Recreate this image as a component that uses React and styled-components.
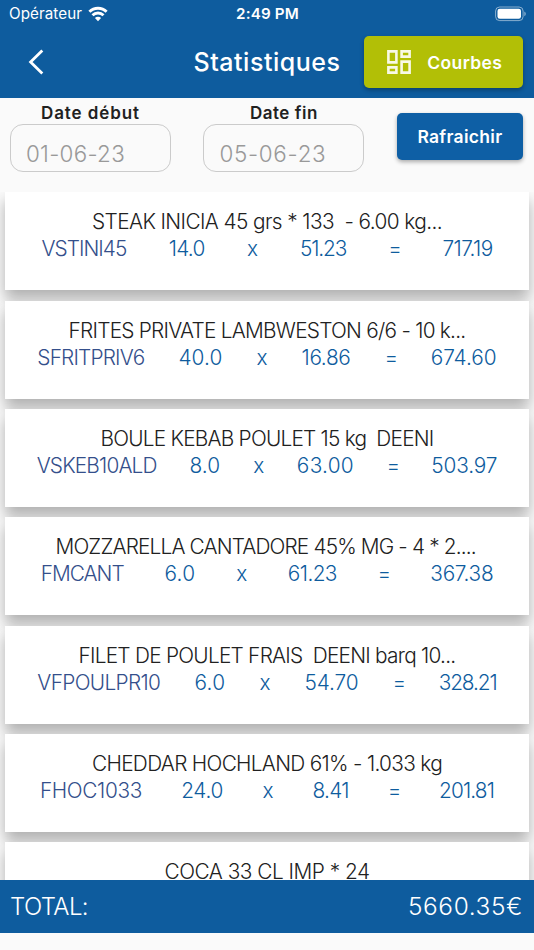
import React, { useLayoutEffect, useRef, useState } from 'react';
import styled, { createGlobalStyle } from 'styled-components';

const GlobalStyle = createGlobalStyle`
  * {
    box-sizing: border-box;
  }

  body {
    margin: 0;
    background: #fafafa;
    font-family: Inter, "Liberation Sans", sans-serif;
    overflow: hidden;
  }
`;

const Screen = styled.div`
  display: flex;
  flex-direction: column;
  width: 534px;
  height: 950px;
  padding-bottom: 17px;
  overflow: hidden;
  background: #fafafa;
`;

const Header = styled.header`
  flex: none;
  height: 98px;
  background: #0e5c9e;
  color: #fff;
`;

const StatusBar = styled.div`
  display: grid;
  grid-template-columns: 1fr auto 1fr;
  align-items: center;
  height: 27px;
  padding: 0 8px 0 9px;
`;

const Carrier = styled.div`
  display: flex;
  align-items: center;
  gap: 6px;
`;

const Battery = styled.svg`
  justify-self: end;
`;

const NavBar = styled.div`
  display: flex;
  align-items: center;
  height: 71px;
  padding: 0 11px 1px 28px;
`;

const BackButton = styled.button`
  display: flex;
  width: 165.5px;
  padding: 0;
  border: 0;
  background: none;
  color: inherit;
`;

const Button = styled.button`
  display: flex;
  align-items: center;
  justify-content: center;
  gap: ${props => props.$gap || 0}px;
  width: ${props => props.$width}px;
  height: ${props => props.$height}px;
  padding: 0;
  border: 0;
  border-radius: 5px;
  background: ${props => props.$color};
  box-shadow: 0 2px 4px rgba(0, 0, 0, 0.32);
  color: #fff;
  font-family: inherit;
`;

const CurvesButton = styled(Button)`
  margin-left: auto;
  padding-left: 3px;
`;

const Filters = styled.section`
  display: flex;
  flex: none;
  height: 94px;
  padding: 5px 11px 0 10px;
`;

const Field = styled.label`
  display: flex;
  flex-direction: column;
  align-items: center;
  width: 161px;
  margin-right: 32.4px;
`;

const DateBox = styled.div`
  display: flex;
  align-items: center;
  width: 161px;
  height: 48px;
  margin-top: 1px;
  padding: 11px 0 0 15px;
  border: 1px solid #cbcbcb;
  border-radius: 13px;
`;

const Refresh = styled(Button)`
  margin: 10px 0 0 auto;
`;

const List = styled.main`
  display: flex;
  flex: 1;
  flex-direction: column;
  gap: 10.35px;
  min-height: 0;
  padding: 0.4px 5.3px 0;
  overflow: hidden;
`;

const Card = styled.article`
  position: relative;
  flex: none;
  height: 98px;
  padding: 16px 15px 0;
  background: #fff;
  box-shadow: 0 9px 14px rgba(0, 0, 0, 0.3);
`;

const CardTitle = styled.div`
  display: flex;
  justify-content: center;
  height: 27px;
`;

const Line = styled.div`
  display: flex;
  justify-content: space-around;
  height: 27px;
`;

const Footer = styled.footer`
  position: relative;
  display: flex;
  flex: none;
  align-items: center;
  justify-content: space-between;
  height: 53px;
  padding: 0 11px 0 10px;
  background: #0e5c9e;
`;

const Label = styled.span`
  display: block;
  flex: none;
  width: ${props => props.$width}px;
  color: ${props => props.$color || '#fff'};
  font-size: ${props => props.$size || 20.8}px;
  font-weight: ${props => props.$weight || 300};
  font-variation-settings: "opsz" 32;
  line-height: 27px;
  white-space: pre;
`;

// keeps a label on its given width by adjusting the tracking
const FitText = ({ children, width, ...rest }) => {
  const ref = useRef(null);
  const [spacing, setSpacing] = useState(0);

  useLayoutEffect(() => {
    const natural = ref.current.getBoundingClientRect().width;
    setSpacing((width - natural) / children.length);
  }, [children, width]);

  return (
    <Label $width={width} {...rest}>
      <span ref={ref} style={{ letterSpacing: spacing }}>{children}</span>
    </Label>
  );
};

const WifiIcon = () => (
  <svg width="20" height="16" viewBox="0 0 20 16" fill="none" stroke="#fff" strokeWidth="2.9">
    <path d="M1.4 5.8a12.2 12.2 0 0 1 17.2 0" />
    <path d="M4.5 9.3a7.8 7.8 0 0 1 11 0" />
    <path d="M10 15.2 6.9 12.1a4.4 4.4 0 0 1 6.2 0z" fill="#fff" stroke="none" />
  </svg>
);

const BatteryIcon = () => (
  <Battery width="31" height="16" viewBox="0 0 31 16">
    <rect x="0.6" y="1" width="27.5" height="13.6" rx="4" fill="none" stroke="#fff" strokeOpacity="0.5" />
    <rect x="2.5" y="2.8" width="23.5" height="10" rx="2.3" fill="#fff" />
    <path d="M29.3 5.5c2 .8 2 3.9 0 4.7z" fill="#fff" fillOpacity="0.5" />
  </Battery>
);

const BackIcon = () => (
  <svg width="17" height="26" viewBox="0 0 17 26" fill="none" stroke="#fff" strokeWidth="2.8">
    <path d="M14.3 1.5 2.6 13l11.7 11.5" />
  </svg>
);

const DashboardIcon = () => (
  <svg width="24" height="24" viewBox="0 0 24 24" fill="none" stroke="#fff" strokeOpacity="0.9" strokeWidth="2.6">
    <path d="M1.4 1.4h8v11h-8zM14.6 1.4h8v5.2h-8zM1.4 17.4h8v5.2h-8zM14.6 11.6h8v11h-8z" />
  </svg>
);

const items = [
  {
    title: ['STEAK INICIA 45 grs * 133  - 6.00 kg...', 350],
    cells: [['VSTINI45', 85], ['14.0', 36], ['x', 11], ['51.23', 46], ['=', 12], ['717.19', 50]],
  },
  {
    title: ['FRITES PRIVATE LAMBWESTON 6/6 - 10 k...', 397],
    cells: [['SFRITPRIV6', 107], ['40.0', 44], ['x', 11], ['16.86', 49], ['=', 12], ['674.60', 66]],
  },
  {
    title: ['BOULE KEBAB POULET 15 kg  DEENI', 333],
    cells: [['VSKEB10ALD', 120], ['8.0', 31], ['x', 11], ['63.00', 57], ['=', 12], ['503.97', 66]],
  },
  {
    title: ['MOZZARELLA CANTADORE 45% MG - 4 * 2....', 423],
    cells: [['FMCANT', 83], ['6.0', 31], ['x', 11], ['61.23', 49], ['=', 12], ['367.38', 63]],
  },
  {
    title: ['FILET DE POULET FRAIS  DEENI barq 10...', 377],
    cells: [['VFPOULPR10', 123], ['6.0', 31], ['x', 11], ['54.70', 54], ['=', 12], ['328.21', 58]],
  },
  {
    title: ['CHEDDAR HOCHLAND 61% - 1.033 kg', 350],
    cells: [['FHOC1033', 102], ['24.0', 42], ['x', 11], ['8.41', 36], ['=', 12], ['201.81', 55]],
  },
  { title: ['COCA 33 CL IMP * 24', 205], cells: [] },
];

const Item = ({ title, cells }) => (
  <Card>
    <CardTitle>
      <FitText width={title[1]} $color="#212121">{title[0]}</FitText>
    </CardTitle>
    <Line>
      {cells.map(([text, width], i) => (
        <FitText key={i} width={width} $color={i === 0 ? '#344f8b' : '#0e5c9e'}>{text}</FitText>
      ))}
    </Line>
  </Card>
);

const FieldLabel = styled.div`
  height: 20px;
  margin-top: -3px;
  margin-bottom: 3px;
`;

const DateField = ({ label, labelWidth, value, valueWidth }) => (
  <Field>
    <FieldLabel>
      <FitText width={labelWidth} $size={17} $weight={560} $color="#212121">{label}</FitText>
    </FieldLabel>
    <DateBox>
      <FitText width={valueWidth} $size={22.4} $color="#999">{value}</FitText>
    </DateBox>
  </Field>
);

const App = () => (
  <>
    <GlobalStyle />
    <Screen>
      <Header>
        <StatusBar>
          <Carrier>
            <FitText width={73} $size={15.2} $weight={400}>Opérateur</FitText>
            <WifiIcon />
          </Carrier>
          <FitText width={63} $size={15.2} $weight={600}>2:49 PM</FitText>
          <BatteryIcon />
        </StatusBar>
        <NavBar>
          <BackButton aria-label="Retour"><BackIcon /></BackButton>
          <FitText width={147} $size={25} $weight={460}>Statistiques</FitText>
          <CurvesButton $width={159.5} $height={52} $gap={16} $color="#b2bf06">
            <DashboardIcon />
            <FitText width={75} $size={17.5} $weight={560}>Courbes</FitText>
          </CurvesButton>
        </NavBar>
      </Header>
      <Filters>
        <DateField label="Date début" labelWidth={99} value="01-06-23" valueWidth={99} />
        <DateField label="Date fin" labelWidth={68} value="05-06-23" valueWidth={107} />
        <Refresh $width={126.5} $height={46.5} $color="#0e5fa5">
          <FitText width={85} $size={17.5} $weight={560}>Rafraichir</FitText>
        </Refresh>
      </Filters>
      <List>
        {items.map(item => <Item key={item.title[0]} {...item} />)}
      </List>
      <Footer>
        <FitText width={78} $size={24}>TOTAL:</FitText>
        <FitText width={115} $size={24.4}>5660.35€</FitText>
      </Footer>
    </Screen>
  </>
);

export default App;
